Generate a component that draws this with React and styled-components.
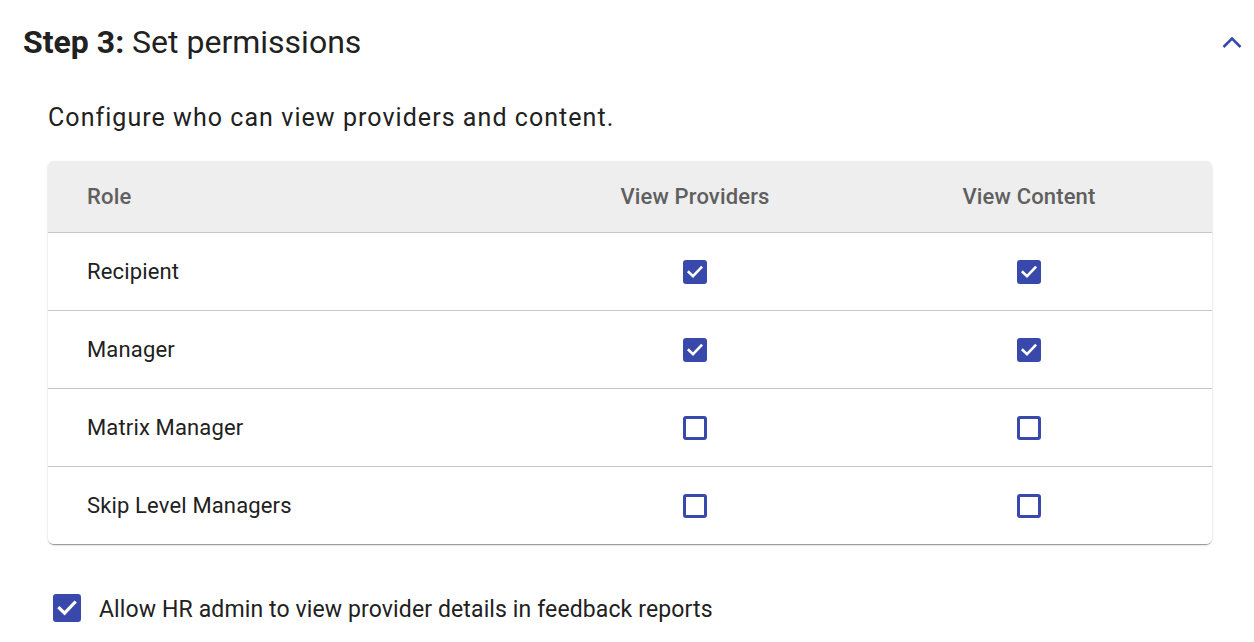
import React, { useState } from "react";
import styled, { createGlobalStyle } from "styled-components";

const Global = createGlobalStyle`
  html, body { margin: 0; padding: 0; background: #fff; }
  body { font-family: Roboto, "Noto Sans", Arial, sans-serif; color: #212121; }
`;

const Page = styled.div`
  width: 1254px;
  height: 642px;
  overflow: hidden;
  box-sizing: border-box;
`;

const Header = styled.div`
  display: flex;
  align-items: center;
  justify-content: space-between;
  height: 84px;
  padding: 0 8px 0 23px;
`;

const Title = styled.h2`
  margin: 0;
  font-size: 32px;
  font-weight: 400;
  color: #212121;
  letter-spacing: 0;
  b { font-weight: 700; }
`;

const Toggle = styled.button`
  border: 0;
  background: none;
  padding: 0;
  width: 28px;
  height: 28px;
  display: flex;
  align-items: center;
  justify-content: center;
  cursor: pointer;
`;

const Body = styled.div`
  padding: 18px 42px 0 48px;
`;

const Intro = styled.p`
  margin: 0 0 27px;
  font-size: 25px;
  letter-spacing: 1.05px;
  color: #212121;
  line-height: 32px;
`;

const Card = styled.div`
  border-radius: 6px;
  background: #fff;
  box-shadow: 0 2px 1px -1px rgba(0,0,0,0.24), 0 1px 1px 0 rgba(0,0,0,0.16), 0 1px 3px 0 rgba(0,0,0,0.12);
  overflow: hidden;
`;

const Row = styled.div`
  display: grid;
  grid-template-columns: 480px 1fr 1fr;
  padding-right: 16px;
  align-items: center;
  height: ${p => (p.$head ? 71 : 77)}px;
  background: ${p => (p.$head ? "#eeeeee" : "#fff")};
  border-bottom: 1px solid #c6c6c6;
  &:last-child { border-bottom: 0; }
`;

const Cell = styled.div`
  padding-left: ${p => (p.$center ? 0 : 39)}px;
  display: flex;
  justify-content: ${p => (p.$center ? "center" : "flex-start")};
  font-size: 22px;
  letter-spacing: 0.15px;
  font-weight: ${p => (p.$head ? 500 : 400)};
  color: ${p => (p.$head ? "#5f5f5f" : "#212121")};
`;

const Box = styled.span`
  box-sizing: border-box;
  width: ${p => p.$size}px;
  height: ${p => p.$size}px;
  border-radius: 3px;
  border: 3px solid #3949ab;
  background: ${p => (p.$on ? "#3949ab" : "#fff")};
  display: inline-flex;
  align-items: center;
  justify-content: center;
  cursor: pointer;
  flex: none;
`;

const Footer = styled.label`
  display: flex;
  align-items: center;
  gap: 18px;
  margin: 49px 0 0 5px;
  font-size: 23px;
  letter-spacing: 0.12px;
  color: #212121;
  cursor: pointer;
`;

const FooterText = styled.span`
  padding-top: 3px;
`;

function Check({ on, size = 24, onClick }) {
  return (
    <Box $on={on} $size={size} onClick={onClick} role="checkbox" aria-checked={on}>
      {on && (
        <svg width={size - 6} height={size - 6} viewBox="0 0 18 18">
          <path d="M2.8 9.2 L7 13.2 L15.2 4.6" fill="none" stroke="#fff" strokeWidth="2.6" strokeLinecap="square" />
        </svg>
      )}
    </Box>
  );
}

const initialRoles = [
  { name: "Recipient", providers: true, content: true },
  { name: "Manager", providers: true, content: true },
  { name: "Matrix Manager", providers: false, content: false },
  { name: "Skip Level Managers", providers: false, content: false },
];

export default function App() {
  const [roles, setRoles] = useState(initialRoles);
  const [hr, setHr] = useState(true);
  const flip = (i, key) =>
    setRoles(r => r.map((x, j) => (j === i ? { ...x, [key]: !x[key] } : x)));

  return (
    <Page>
      <Global />
      <Header>
        <Title><b>Step 3:</b> Set permissions</Title>
        <Toggle aria-label="Collapse">
          <svg width="20" height="14" viewBox="0 0 20 14">
            <path d="M1.5 12 L10 3.5 L18.5 12" fill="none" stroke="#3949ab" strokeWidth="2.6" />
          </svg>
        </Toggle>
      </Header>
      <Body>
        <Intro>Configure who can view providers and content.</Intro>
        <Card>
          <Row $head>
            <Cell $head>Role</Cell>
            <Cell $head $center>View Providers</Cell>
            <Cell $head $center>View Content</Cell>
          </Row>
          {roles.map((r, i) => (
            <Row key={r.name}>
              <Cell>{r.name}</Cell>
              <Cell $center><Check on={r.providers} onClick={() => flip(i, "providers")} /></Cell>
              <Cell $center><Check on={r.content} onClick={() => flip(i, "content")} /></Cell>
            </Row>
          ))}
        </Card>
        <Footer>
          <Check on={hr} size={28} onClick={() => setHr(v => !v)} />
          <FooterText>Allow HR admin to view provider details in feedback reports</FooterText>
        </Footer>
      </Body>
    </Page>
  );
}
